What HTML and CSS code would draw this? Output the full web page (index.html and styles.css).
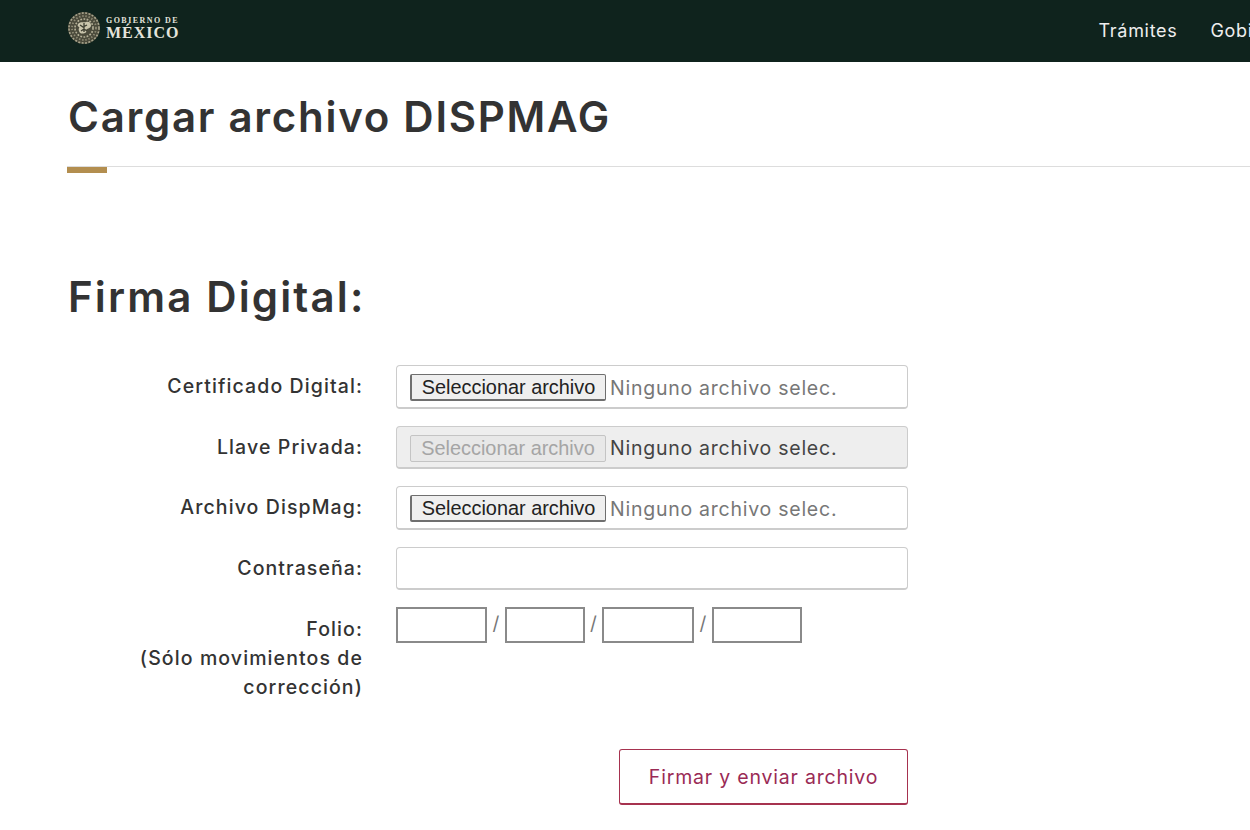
FILE: index.html
```html
<!DOCTYPE html>
<html lang="es">
<head>
<meta charset="utf-8">
<title>Cargar archivo DISPMAG</title>
<link rel="stylesheet" href="styles.css">
</head>
<body>
<header class="topbar">
  <div class="brand">
    <svg class="seal" viewBox="0 0 34 34" width="34" height="34" aria-hidden="true">
      <circle cx="17" cy="17" r="16" fill="#4a4a3b"/>
      <circle cx="17" cy="17" r="15" fill="none" stroke="#a9a58d" stroke-width="1.6" stroke-dasharray="2 1.4"/>
      <circle cx="17" cy="17" r="12" fill="none" stroke="#8f8c76" stroke-width="1.8" stroke-dasharray="1.4 1.8"/>
      <circle cx="17" cy="17" r="9" fill="none" stroke="#b5b198" stroke-width="1.6" stroke-dasharray="1.8 1.4"/>
      <path d="M11 13c3-3 6-1 8-2s5 0 5 3-2 3-4 4 1 3-2 4-5 1-6-2 1-3 0-4-2-1-1-3z" fill="#c9c5ac"/>
      <path d="M13 14l3 2 4-2M14 20l3-2 3 2M17 12v9" fill="none" stroke="#3c3d30" stroke-width="1.3"/>
    </svg>
    <div class="wordmark">
      <span class="wm-top">GOBIERNO DE</span>
      <span class="wm-main">MÉXICO</span>
    </div>
  </div>
  <nav class="nav">
    <a class="nav-link">Trámites</a>
    <a class="nav-link">Gobierno</a>
  </nav>
</header>

<main class="page">
  <h1 class="title">Cargar archivo DISPMAG</h1>
  <div class="rule"><span class="rule-accent"></span></div>

  <h2 class="subtitle">Firma Digital:</h2>

  <form class="form">
    <label class="lbl">Certificado Digital:</label>
    <div class="box"><button type="button" class="file-btn">Seleccionar archivo</button><span class="file-name">Ninguno archivo selec.</span></div>

    <label class="lbl">Llave Privada:</label>
    <div class="box box-off"><button type="button" class="file-btn" disabled>Seleccionar archivo</button><span class="file-name file-name-off">Ninguno archivo selec.</span></div>

    <label class="lbl">Archivo DispMag:</label>
    <div class="box"><button type="button" class="file-btn">Seleccionar archivo</button><span class="file-name">Ninguno archivo selec.</span></div>

    <label class="lbl">Contraseña:</label>
    <input class="box" type="password">

    <label class="lbl lbl-folio">Folio:<br>(Sólo movimientos de corrección)</label>
    <div class="folio">
      <input class="folio-in w1" type="text"><span class="slash">/</span>
      <input class="folio-in w2" type="text"><span class="slash">/</span>
      <input class="folio-in w3" type="text"><span class="slash">/</span>
      <input class="folio-in w4" type="text">
    </div>

    <div class="actions">
      <button type="button" class="submit">Firmar y enviar archivo</button>
    </div>
  </form>
</main>
</body>
</html>
```
FILE: styles.css
```css
* { box-sizing: border-box; }
html, body { margin: 0; padding: 0; height: 830px; overflow: hidden; background: #fff; }
body { font-family: Inter, "Open Sans", sans-serif; color: #333; }

.topbar {
  height: 62px;
  background: #0f231d;
  display: flex;
  align-items: flex-start;
  padding-left: 67px;
  overflow: hidden;
  white-space: nowrap;
}
.brand { display: flex; align-items: center; gap: 5px; height: 56px; }
.seal { display: block; flex: none; }
.wordmark { display: flex; flex-direction: column; font-family: "Liberation Serif", serif; font-weight: 700; color: #e4e4dc; }
.wm-top { font-size: 8px; line-height: 9px; letter-spacing: 1.45px; }
.wm-main { font-size: 16px; line-height: 16px; letter-spacing: 1px; }
.nav { display: flex; gap: 33px; margin-left: 919px; height: 60px; align-items: center; flex: none; }
.nav-link { font-size: 18px; color: #eee; letter-spacing: .7px; }

.page { padding-left: 68px; }
.title { margin: 0; padding-top: 29px; font-size: 42px; line-height: 52px; font-weight: 600; letter-spacing: 1.72px; color: #333; }
.rule { height: 1px; margin-top: 23px; margin-left: -1px; background: #ddd; position: relative; }
.rule-accent { position: absolute; left: 0; top: 1px; width: 40px; height: 6px; background: #b38e4f; }
.subtitle { margin: 104px 0 0; font-size: 42px; line-height: 52px; font-weight: 600; letter-spacing: 2.15px; color: #333; }

.form {
  display: grid;
  grid-template-columns: 295px 512px;
  column-gap: 33px;
  row-gap: 17px;
  margin-top: 42px;
}
.lbl { text-align: right; font-size: 19.5px; line-height: 29px; font-weight: 500; padding-top: 7px; color: #333; letter-spacing: 1.1px; }
.box {
  height: 43.5px;
  width: 512px;
  border: 1px solid #ccc;
  border-bottom-width: 2px;
  border-radius: 4px;
  background: #fff;
  display: flex;
  align-items: center;
  padding: 3px 0 0 13px;
  outline: none;
}
.box-off { background: #eee; }
.file-btn {
  height: 27px;
  width: 196px;
  padding: 1px 0 0;
  border: 2px solid #6f6f6f;
  border-width: 1px 1px 2px 2px;
  border-radius: 2px;
  background: #efefef;
  font-family: "Liberation Sans", Arial, sans-serif;
  font-size: 19.9px;
  color: #222;
}
.file-btn:disabled { border: 1px solid #c4c4c4; color: #a5a5a5; background: #e8e8e8; }
.file-name { margin-left: 4px; font-size: 19.5px; color: #777; letter-spacing: .75px; }
.file-name-off { color: #444; }

.lbl-folio { padding-top: 8px; }
.folio { display: flex; align-items: flex-start; height: 36px; }
.folio-in { height: 36px; border: 2px solid #8a8a8a; background: #fff; padding: 0; outline: none; }
.w1 { width: 91px; }
.w2 { width: 80px; }
.w3 { width: 92px; }
.w4 { width: 90px; }
.slash { width: 18px; text-align: center; font-size: 19px; line-height: 34px; color: #777; }
.w2 + .slash { width: 17px; }

.actions { grid-column: 2; display: flex; justify-content: flex-end; margin-top: 30px; }
.submit {
  width: 289px;
  height: 56px;
  border: 1px solid #a6324f;
  border-bottom-width: 2px;
  border-radius: 3px;
  background: #fff;
  color: #9a2a55;
  font-family: Inter, sans-serif;
  font-size: 19.5px;
  letter-spacing: .8px;
}
```
